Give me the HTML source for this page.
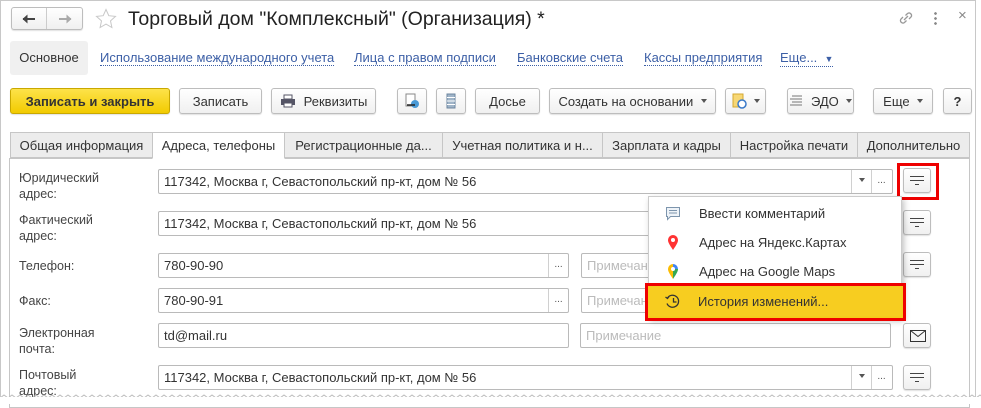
<!DOCTYPE html>
<html><head><meta charset="utf-8"><style>
*{box-sizing:border-box;margin:0;padding:0}
body{width:981px;height:404px;background:#fff;font-family:"Liberation Sans",Arial,sans-serif;font-size:13px;color:#333;position:relative;overflow:hidden}
.a{position:absolute}
.btn{position:absolute;height:26px;border:1px solid #bdbdbd;border-radius:3px;background:linear-gradient(#fff,#f0f0f0);box-shadow:0 1px 1px rgba(0,0,0,.12);display:flex;align-items:center;justify-content:center;font-size:13px;color:#333}
.lnk{position:absolute;top:51px;color:#3c5fa6;border-bottom:1px dotted #3c5fa6;line-height:14px;font-size:13px}
.tab{position:absolute;top:132px;height:26px;border:1px solid #c6c6c6;background:#ececec;display:flex;align-items:center;justify-content:center;font-size:13px;color:#333}
.inp{position:absolute;height:25px;border:1px solid #bababa;border-radius:2px;background:#fff;padding-left:5px;line-height:23px;font-size:13px;color:#333}
.ph{color:#bbb}
.lbl{position:absolute;left:19px;font-size:12.5px;color:#444;line-height:16px}
.sb{position:absolute;top:0;height:23px;border-left:1px solid #d0d0d0;width:20px;text-align:center;color:#555;font-size:10px;line-height:22px}
.tri{display:inline-block;width:0;height:0;border-left:3px solid transparent;border-right:3px solid transparent;border-top:4px solid #555;vertical-align:middle}
.mb{position:absolute;left:903px;width:28px;height:25px;border:1px solid #bdbdbd;border-radius:3px;background:linear-gradient(#fff,#f0f0f0);box-shadow:0 1px 1px rgba(0,0,0,.12)}
.mb i{position:absolute;left:6px;width:14px;height:1px;background:#444}
.mi{position:absolute;left:0;width:253px;height:29px;display:flex;align-items:center;padding-left:50px;font-size:13px;color:#333}
</style></head><body>
<div class="a" style="left:0;top:0;width:976px;height:398px;border:1px solid #c8c8c8;border-bottom:none"></div>
<div class="btn" style="left:11px;top:7px;width:72px;height:23px;padding:0">
<div style="width:36px;height:21px;border-right:1px solid #ccc;display:flex;align-items:center;justify-content:center"><svg width="14" height="10"><path d="M1 5h12" stroke="#444" stroke-width="2"/><path d="M0.5 5l5-4.5v9z" fill="#444"/></svg></div>
<div style="width:36px;display:flex;align-items:center;justify-content:center"><svg width="14" height="10"><path d="M1 5h12" stroke="#aaa" stroke-width="2"/><path d="M13.5 5l-5-4.5v9z" fill="#aaa"/></svg></div></div>
<svg class="a" style="left:95px;top:8px" width="22" height="21"><path d="M11 1.5l2.8 6.2 6.7.7-5 4.5 1.4 6.6L11 16.1l-5.9 3.4 1.4-6.6-5-4.5 6.7-.7z" fill="none" stroke="#c8c8c8"/></svg>
<div class="a" style="left:128px;top:8px;font-size:19.5px;color:#222">Торговый дом "Комплексный" (Организация) *</div>
<svg class="a" style="left:897px;top:9px" width="18" height="18" viewBox="0 0 18 18" fill="none" stroke="#999" stroke-width="1.3"><path d="M7 11l4-4M6 8l-2 2a2.5 2.5 0 003.5 3.5l2-2M12 10l2-2a2.5 2.5 0 00-3.5-3.5l-2 2"/></svg>
<div class="a" style="left:934px;top:11px;width:3px;height:14px;background:radial-gradient(circle,#888 1.2px,transparent 1.5px) 0 0/3px 5px"></div>
<div class="a" style="left:958px;top:7px;font-size:15px;color:#888">×</div>
<div class="a" style="left:10px;top:41px;width:78px;height:34px;background:#f0f0f0;border-radius:3px;line-height:34px;text-align:center;color:#333">Основное</div>
<div class="lnk" style="left:100px">Использование международного учета</div>
<div class="lnk" style="left:354px">Лица с правом подписи</div>
<div class="lnk" style="left:517px">Банковские счета</div>
<div class="lnk" style="left:644px">Кассы предприятия</div>
<div class="lnk" style="left:780px">Еще... &nbsp;<span style="font-size:9px">▼</span></div>
<div class="btn" style="left:10px;top:88px;width:160px;background:linear-gradient(#fde34a,#f2cb00);border-color:#c9a800;font-weight:bold;color:#333">Записать и закрыть</div>
<div class="btn" style="left:179px;top:88px;width:83px">Записать</div>
<div class="btn" style="left:271px;top:88px;width:105px"><svg width="16" height="14" style="margin-right:8px"><rect x="4" y="1" width="8" height="4" fill="#fff" stroke="#556"/><rect x="1" y="5" width="14" height="6" fill="#556"/><rect x="4" y="9" width="8" height="4" fill="#fff" stroke="#556"/></svg>Реквизиты</div>
<div class="btn" style="left:397px;top:88px;width:30px"><svg width="16" height="16"><rect x="2" y="1" width="9" height="12" fill="#fff" stroke="#888"/><circle cx="11" cy="11" r="4" fill="#4a9ad6"/><path d="M3 12h8" stroke="#222" stroke-width="1.5"/></svg></div>
<div class="btn" style="left:436px;top:88px;width:30px"><svg width="10" height="16"><rect x="1" y="1" width="8" height="14" fill="#9fb4c8" stroke="#6d86a0"/><path d="M1 4.5h8M1 8h8M1 11.5h8" stroke="#fff"/></svg></div>
<div class="btn" style="left:475px;top:88px;width:65px">Досье</div>
<div class="btn" style="left:549px;top:88px;width:167px">Создать на основании&nbsp;&nbsp;<span class="tri"></span></div>
<div class="btn" style="left:725px;top:88px;width:41px"><svg width="16" height="16"><rect x="2" y="1" width="10" height="13" fill="#f7d774" stroke="#d4a831"/><circle cx="11" cy="11" r="4" fill="#fff" stroke="#3a79c8" stroke-width="1.5"/></svg>&nbsp;&nbsp;<span class="tri"></span></div>
<div class="btn" style="left:787px;top:88px;width:67px"><svg width="14" height="14" style="margin-right:8px"><path d="M3 2h10M1 5h12M3 8h10M1 11h12" stroke="#777"/></svg>ЭДО&nbsp;&nbsp;<span class="tri"></span></div>
<div class="btn" style="left:873px;top:88px;width:60px">Еще&nbsp;&nbsp;<span class="tri"></span></div>
<div class="btn" style="left:943px;top:88px;width:29px;font-weight:bold">?</div>
<div class="a" style="left:9px;top:158px;width:961px;height:250px;border:1px solid #c6c6c6"></div>
<div class="tab" style="left:10px;width:143px">Общая информация</div>
<div class="tab" style="left:152px;width:133px;background:#fff;border-bottom-color:#fff;height:27px">Адреса, телефоны</div>
<div class="tab" style="left:284px;width:159px">Регистрационные да...</div>
<div class="tab" style="left:442px;width:161px">Учетная политика и н...</div>
<div class="tab" style="left:602px;width:129px">Зарплата и кадры</div>
<div class="tab" style="left:730px;width:128px">Настройка печати</div>
<div class="tab" style="left:857px;width:113px">Дополнительно</div>
<div class="lbl" style="top:170px">Юридический<br>адрес:</div>
<div class="inp" style="left:158px;top:169px;width:735px">117342, Москва г, Севастопольский пр-кт, дом № 56<div class="sb" style="left:692px"><span class="tri"></span></div><div class="sb" style="left:712px">...</div></div>
<div class="lbl" style="top:212px">Фактический<br>адрес:</div>
<div class="inp" style="left:158px;top:211px;width:735px">117342, Москва г, Севастопольский пр-кт, дом № 56</div>
<div class="lbl" style="top:258px">Телефон:</div>
<div class="inp" style="left:158px;top:253px;width:411px">780-90-90<div class="sb" style="left:389px">...</div></div>
<div class="inp ph" style="left:581px;top:253px;width:310px">Примечание</div>
<div class="lbl" style="top:293px">Факс:</div>
<div class="inp" style="left:158px;top:288px;width:411px">780-90-91<div class="sb" style="left:389px">...</div></div>
<div class="inp ph" style="left:581px;top:288px;width:310px">Примечание</div>
<div class="lbl" style="top:325px">Электронная<br>почта:</div>
<div class="inp" style="left:158px;top:323px;width:411px">td@mail.ru</div>
<div class="inp ph" style="left:580px;top:323px;width:311px">Примечание</div>
<div class="lbl" style="top:367px">Почтовый<br>адрес:</div>
<div class="inp" style="left:158px;top:365px;width:735px">117342, Москва г, Севастопольский пр-кт, дом № 56<div class="sb" style="left:692px"><span class="tri"></span></div><div class="sb" style="left:712px">...</div></div>
<div class="mb" style="top:168px"><i style="top:7px"></i><i style="top:11px"></i><i style="top:15px;left:11px;width:4px"></i></div>
<div class="mb" style="top:210px"><i style="top:7px"></i><i style="top:11px"></i><i style="top:15px;left:11px;width:4px"></i></div>
<div class="mb" style="top:252px"><i style="top:7px"></i><i style="top:11px"></i><i style="top:15px;left:11px;width:4px"></i></div>
<div class="mb" style="top:323px"><svg style="position:absolute;left:6px;top:6px" width="16" height="12"><rect x=".5" y=".5" width="15" height="11" fill="none" stroke="#333"/><path d="M.5 .5l7.5 6 7.5-6" fill="none" stroke="#333"/></svg></div>
<div class="mb" style="top:365px"><i style="top:7px"></i><i style="top:11px"></i><i style="top:15px;left:11px;width:4px"></i></div>
<div class="a" style="left:897px;top:163px;width:42px;height:37px;border:3px solid #e00"></div>
<div class="a" style="left:648px;top:196px;width:254px;height:122px;background:#fff;border:1px solid #ccc;box-shadow:2px 3px 6px rgba(0,0,0,.25)">
<div class="mi" style="top:2px"><svg class="a" style="left:16px;top:7px" width="16" height="15"><path d="M1.5 1.5h13v9h-9l-3 3v-3h-1z" fill="#eef3f8" stroke="#7d95ad"/><path d="M4 4.5h8M4 7h8" stroke="#7d95ad"/></svg>Ввести комментарий</div>
<div class="mi" style="top:31px"><svg class="a" style="left:18px;top:6px" width="12" height="17"><path d="M6 16C2 10 1 8 1 6a5 5 0 0110 0c0 2-1 4-5 10z" fill="#f33"/><circle cx="6" cy="6" r="2" fill="#fff"/></svg>Адрес на Яндекс.Картах</div>
<div class="mi" style="top:60px"><svg class="a" style="left:18px;top:6px" width="12" height="17"><path d="M6 16C2 10 1 8 1 6a5 5 0 015-5v5z" fill="#fbbc04"/><path d="M6 1a5 5 0 015 5H6z" fill="#4285f4"/><path d="M11 6c0 2-1 4-5 10V6z" fill="#34a853"/><circle cx="6" cy="6" r="2" fill="#fff"/></svg>Адрес на Google Maps</div>
</div>
<div class="a" style="left:645px;top:283px;width:261px;height:38px;border:3px solid #e00;background:#f5cb1e"></div>
<div class="mi a" style="left:648px;top:287px;height:29px;background:#f7cd20"><svg class="a" style="left:16px;top:6px" width="17" height="17" fill="none" stroke="#333" stroke-width="1.3"><path d="M3.5 5A6 6 0 1 1 3 10.5"/><path d="M1.5 4l2 1.5 1.5-2"/><path d="M9.5 5v4h3"/></svg>История изменений...</div>
<svg class="a" style="left:0;top:394px" width="981" height="10"><defs><pattern id="z" width="8" height="10" patternUnits="userSpaceOnUse"><path d="M0 4l4 -3 4 3" fill="none" stroke="#bbb" stroke-width="1"/></pattern></defs><rect width="981" height="4" y="0" fill="url(#z)"/><rect y="3" width="981" height="7" fill="#fff"/></svg>
</body></html>
